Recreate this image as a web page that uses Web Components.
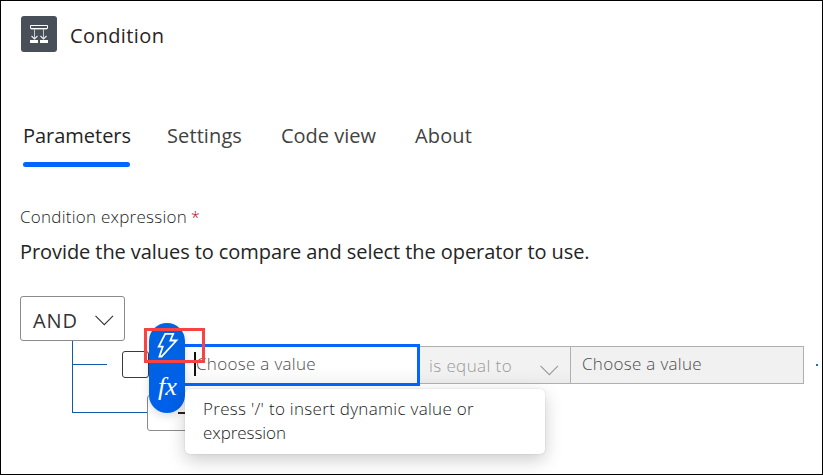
<!DOCTYPE html>
<html lang="en">
<head>
<meta charset="utf-8">
<title>Condition</title>
<style>
html,body{margin:0;padding:0;background:#fff}
body{font-family:"Open Sans","Noto Sans",sans-serif;overflow:hidden}
</style>
</head>
<body>
<condition-panel></condition-panel>
<script>
const define = (name, html, ready) => {
  const t = document.createElement('template');
  t.innerHTML = html;
  customElements.define(name, class extends HTMLElement {
    constructor() {
      super();
      this.attachShadow({mode: 'open'}).append(t.content.cloneNode(true));
    }
    connectedCallback() { if (ready) ready.call(this, this.shadowRoot); }
  });
};

/* One line of text, tracked so that it fills the width it is given. */
define('text-line', `<style>
:host{display:block;white-space:nowrap;line-height:24px;flex:none}
span{display:inline-block}
</style><span><slot></slot></span>`, function (root) {
  const want = parseFloat(this.getAttribute('fit'));
  const span = root.querySelector('span');
  const n = this.textContent.length;
  const gap = (want - span.getBoundingClientRect().width) / n;
  span.style.letterSpacing = gap.toFixed(3) + 'px';
});

define('chevron-down', `<style>:host{display:block;width:20px;height:12px}svg{display:block}</style>
<svg width="20" height="12" fill="none" stroke="currentColor" stroke-width="1.1"><path d="M.5 .8 9.3 9.600 18 .9"/></svg>`);

define('panel-header', `<style>
:host{display:flex;gap:13px;padding:15px 0 0 20px;height:36px;color:#2b2324}
text-line{font-size:20px;padding-top:8px}
.icon{width:36px;height:36px;border-radius:3px;background:#484f58}
svg{display:block}
</style>
<div class="icon"><svg width="36" height="36" fill="none" stroke="#fff">
<path d="M9.5 9.500h17v3h-17z"/><path d="M10 13.500h16" stroke="#8d9298"/><path d="M13.500 13v9M22.500 13v9" stroke="#c4c8cc"/><path d="M10.500 20l3 3 3-3M19.500 20l3 3 3-3" stroke="#eceded" stroke-width="1.2"/>
<path d="M9 24h8v3H9zM19 24h8v3h-8z" fill="#fff" stroke="none"/></svg></div>
<text-line fit="94.5">Condition</text-line>`);

define('tab-item', `<style>
:host{display:block;height:44px;box-sizing:border-box;color:#424242;font-size:20px}
:host([selected]){color:#242424;width:107px}
:host([selected])::after{content:"";display:block;height:5px;border-radius:3px;background:#0565ff;margin-top:14px}
</style><slot></slot>`);

define('tab-strip', `<style>
:host{display:flex;gap:39px;padding:72px 0 0 22px}
tab-item[selected]{margin-right:-2px}
</style>
<tab-item selected><text-line fit="108">Parameters</text-line></tab-item>
<tab-item><text-line fit="75">Settings</text-line></tab-item>
<tab-item><text-line fit="95">Code view</text-line></tab-item>
<tab-item><text-line fit="57">About</text-line></tab-item>`);

define('field-intro', `<style>
:host{display:block;padding:37px 0 0 19px;color:#242424}
.label{display:flex;font-size:17px;font-weight:300;gap:4px}
.star{color:#b10e1c;font-size:16px}
.desc{font-size:20px;margin-top:11px}
</style>
<div class="label"><text-line fit="167">Condition expression</text-line><text-line class="star" fit="8">*</text-line></div>
<text-line class="desc" fit="569.5">Provide the values to compare and select the operator to use.</text-line>`);

define('group-operator', `<style>
:host{display:flex;box-sizing:border-box;width:105px;height:45px;margin:32px 0 0 19px;border:1px solid #8a8a8a;border-radius:3px;color:#333;padding:12px 0 0 12px;gap:17px;font-size:20px}
chevron-down{margin-top:6px}
</style><text-line fit="45">AND</text-line><chevron-down></chevron-down>`);

define('value-box', `<style>
:host{display:block;box-sizing:border-box;height:38px;border:1px solid #b0b0b0;background:#f1f1f1;color:#4c4c4c;font-size:17px;font-weight:300;padding:5px 0 0 11px;position:relative}
:host([active]){height:42px;border:3px solid #0565ff;background:linear-gradient(#fff 55%,#f6f6f6);padding:5px 0 0 12px}
:host([active])::before{content:"";position:absolute;left:10px;top:5px;width:2px;height:24px;background:#111}
</style><slot></slot>`);

define('operator-box', `<style>
:host{display:flex;box-sizing:border-box;width:150px;height:38px;border:1px solid #b0b0b0;border-width:1px 0;background:linear-gradient(#f2f2f2 60%,#ebebeb);color:#999;font-size:17px;font-weight:300;padding:7px 0 0 9px;gap:28px}
chevron-down{margin-top:11px}
</style><text-line fit="83">is equal to</text-line><chevron-down></chevron-down>`);

define('condition-row', `<style>
:host{display:flex;align-items:center;height:42px;margin:3px 0 0 71px}
.twig{width:35px;height:1px;background:#0f5ba7;margin-bottom:1px}
.check{box-sizing:border-box;width:27px;height:27px;border:1px solid #3a3a3a;border-radius:3px;margin-left:15px;margin-bottom:1px}
.active{width:239px;margin-left:32px}
.target{width:234px}
.more{width:2px;height:2px;background:#0078d4;margin-left:12px}
</style>
<div class="twig"></div><div class="check"></div>
<value-box active class="active"><text-line fit="120">Choose a value</text-line></value-box>
<operator-box></operator-box>
<value-box class="target"><text-line fit="120">Choose a value</text-line></value-box>
<div class="more"></div>`);

define('add-row', `<style>
:host{display:flex;height:36px;margin:9px 0 0 71px}
.twig{width:75px;height:1px;background:#0f5ba7;margin-top:17px}
.add{box-sizing:border-box;width:90px;height:36px;border:1px solid #8a8a8a;border-radius:3px;padding:16px 0 0 30px}
.add i{display:block;width:14px;height:2px;background:#242424}
</style><div class="twig"></div><div class="add"><i></i></div>`);

define('token-pill', `<style>
:host{display:block;width:36px;height:90px;border-radius:18px;background:linear-gradient(#0063e0,#0060ea);box-shadow:0 3px 8px #0002;color:#fff}
svg{display:block}
text{font:italic 25px "Liberation Serif",serif;fill:#fff}
</style>
<svg width="36" height="90"><path d="M16.200 10.800h8l-2.800 6.700h6L12.600 33.500h-2.200l3.300-9.800H9.700z" fill="none" stroke="#fff" stroke-width="1.800"/>
<text x="9" y="72" textLength="19" lengthAdjust="spacingAndGlyphs">fx</text></svg>`);

define('hint-callout', `<style>
:host{display:block;box-sizing:border-box;width:360px;height:65px;border-radius:5px;background:#fff;box-shadow:0 6px 18px #0003,0 0 2px #0002;padding:8px 0 0 18px;color:#1c1c1c;font-size:17px;font-weight:300}
</style>
<text-line fit="271">Press '/' to insert dynamic value or</text-line>
<text-line fit="83">expression</text-line>`);

define('condition-panel', `<style>
:host{display:block;box-sizing:border-box;width:823px;height:475px;border:1px solid #000;position:relative;overflow:hidden;background:#fff}
.trunk{position:absolute;left:71px;top:340px;width:1px;height:72px;background:#0f5ba7}
token-pill{position:absolute;left:148px;top:322px}
hint-callout{position:absolute;left:184px;top:388px}
.mark{position:absolute;box-sizing:border-box;left:143px;top:327px;width:61px;height:35px;border:3px solid #f94343}
</style>
<panel-header></panel-header>
<tab-strip></tab-strip>
<field-intro></field-intro>
<group-operator></group-operator>
<div class="trunk"></div>
<condition-row></condition-row>
<add-row></add-row>
<token-pill></token-pill>
<hint-callout></hint-callout>
<div class="mark"></div>`);
</script>
</body>
</html>
